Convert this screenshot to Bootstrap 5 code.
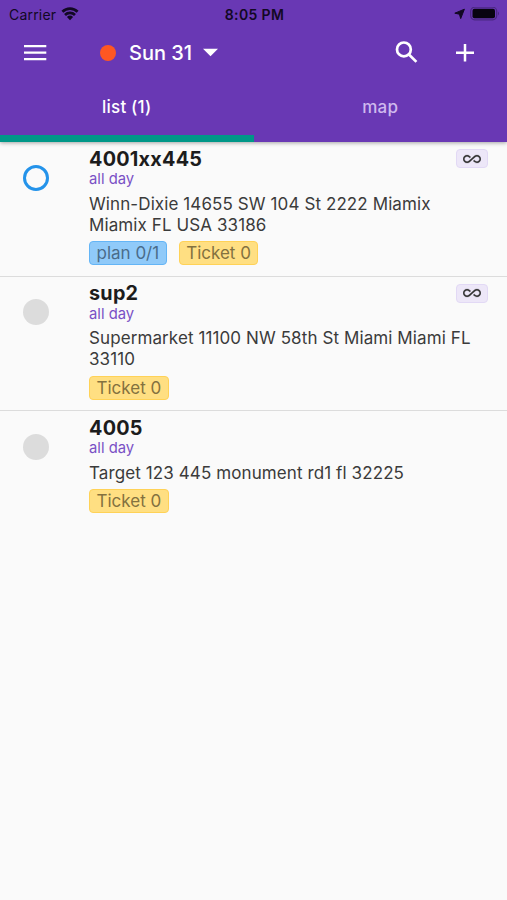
<!DOCTYPE html>
<html lang="en">
<head>
<meta charset="utf-8">
<meta name="viewport" content="width=device-width, initial-scale=1">
<title>Sun 31</title>
<link href="https://cdn.jsdelivr.net/npm/bootstrap@5.3.0/dist/css/bootstrap.min.css" rel="stylesheet">
<style>
body{font-family:Inter,"Liberation Sans",sans-serif;background:#fafafa;color:#3b3b3b}
svg{display:block;flex:none}
.app-head{height:142.3px;background:#6938b4;box-shadow:0 1px 4px rgba(0,0,0,.35)}
.status{height:28px;padding:0 7px 0 9px;color:#120824;font-size:14px}
.status>*{flex:1 1 0}
.carrier{letter-spacing:.2px}
.clock{font-weight:600;letter-spacing:.35px}
.toolbar{height:49px;padding:0 33px 0 23px;color:#fff}
.day{margin-left:53px;font-size:20px;font-weight:500}
.dot{width:16px;height:16px;background:#ff5722}
.day-name{margin:0 11px 0 13px;line-height:28px}
.plus{margin-left:38px}
.tabs{height:65.3px;font-size:17px;font-weight:500;letter-spacing:.2px}
.tabs a{color:#fff;text-decoration:none;padding-top:17px;line-height:26px;border-bottom:7px solid transparent}
.tabs a.active{border-color:#009788}
.tabs a:not(.active){color:#cfb9ee}
.stop{padding:4.6px 19px 0 23px;border-bottom:1px solid #dcdcdc;height:134.4px}
.stop:last-child{border:0}
.state{width:26px;height:26px;margin:18px 40px 0 0;background:#dcdcdc;flex:none}
.state.open{background:none;border:3px solid #2493ea}
.stop h2{font-size:19.8px;font-weight:700;line-height:25.6px;letter-spacing:.25px;color:#1c1c1c;margin:0}
.when{font-size:14.8px;line-height:15px;color:#7950c5}
.addr{font-size:17px;line-height:21px;letter-spacing:.1px;margin:6.3px 0 5.4px}
.chips{gap:12px}
.chip{height:24px;line-height:22px;padding:0 6.5px;border:1px solid #ffd257;border-radius:4px;background:#ffdf82;color:#83713f;font-size:17px}
.chip.plan{background:#90caf9;border-color:#64b5f6;color:#4a6c8a}
.loop{width:32px;height:19px;margin-top:2.6px;border:1px solid #e2d9f5;border-radius:4px;background:#ede7f8;color:#333}
</style>
<script src="https://cdn.jsdelivr.net/npm/bootstrap@5.3.0/dist/js/bootstrap.bundle.min.js"></script>
</head>
<body>
<svg width="0" height="0" class="position-absolute"><symbol id="inf" viewBox="0 0 24 24"><path fill="currentColor" stroke="currentColor" stroke-width=".3" d="M18.6 6.62c-1.44 0-2.8.56-3.77 1.53L12 10.66 10.48 12h.01L7.8 14.39c-.64.64-1.49.99-2.4.99-1.87 0-3.39-1.51-3.39-3.38S3.53 8.62 5.4 8.62c.91 0 1.76.35 2.44 1.03l1.13 1 1.51-1.34L9.22 8.2C8.2 7.18 6.84 6.62 5.4 6.62 2.42 6.62 0 9.04 0 12s2.42 5.38 5.4 5.38c1.44 0 2.8-.56 3.77-1.53l2.83-2.5.01.01L13.52 12h-.01l2.69-2.39c.64-.64 1.49-.99 2.4-.99 1.87 0 3.39 1.51 3.39 3.38s-1.52 3.38-3.39 3.38c-.9 0-1.76-.35-2.44-1.03l-1.14-1.01-1.51 1.34 1.27 1.12c1.02 1.01 2.37 1.57 3.82 1.57 2.98 0 5.4-2.41 5.4-5.38s-2.42-5.37-5.4-5.37z"/></symbol></svg>
<header class="app-head">
  <div class="status d-flex align-items-center">
    <div class="d-flex align-items-center"><span class="carrier">Carrier</span>
      <svg class="ms-1" width="20" height="15" viewBox="0 0 20 15" fill="none" stroke="currentColor" stroke-width="2.7"><path d="M2.4 4.8a10.8 10.8 0 0 1 15.2 0M5 8a7.1 7.1 0 0 1 10 0"/><path d="M10 13.2 6.9 10a4.5 4.5 0 0 1 6.2 0z" fill="currentColor" stroke="none"/></svg></div>
    <div class="clock text-center">8:05 PM</div>
    <div class="d-flex align-items-center justify-content-end">
      <svg width="13" height="13" viewBox="0 0 13 13" fill="currentColor" stroke="currentColor" stroke-width="1" stroke-linejoin="round"><path d="M11.4 1.2 7.7 10.6 6.4 6.2 1.8 5.2z"/></svg>
      <svg class="ms-1" width="30" height="14" viewBox="0 0 30 14"><rect x=".7" y=".2" width="26" height="12.6" rx="4" fill="none" stroke="#4b2882" stroke-width="1.2"/><rect x="2.5" y="1.8" width="22.5" height="9.4" rx="2" fill="#080410"/><path d="M28 4.5q2 2 0 4z" fill="#4b2882"/></svg>
    </div>
  </div>
  <div class="toolbar d-flex align-items-center">
    <svg width="24" height="16" viewBox="0 0 24 16" stroke="currentColor" stroke-width="2.3"><path d="M1 1.2h22.3M1 7.7h22.3M1 14.2h22.3"/></svg>
    <div class="day d-flex align-items-center"><span class="dot rounded-circle"></span><span class="day-name">Sun 31</span>
      <svg width="16" height="9" viewBox="0 0 16 9" fill="currentColor"><path d="M0 .8h15L7.5 8.3z"/></svg></div>
    <svg class="ms-auto" width="23" height="23" viewBox="0 0 23 23" fill="none" stroke="currentColor" stroke-width="2.7"><circle cx="8.9" cy="8.4" r="6.9"/><path d="m13.7 13.2 7.7 7.7"/></svg>
    <svg class="plus" width="18" height="18" viewBox="0 0 18 18" stroke="currentColor" stroke-width="2.5"><path d="M0 8.7h18M9 0v17.5"/></svg>
  </div>
  <nav class="tabs d-flex text-center"><a class="w-50 active" href="#">list (1)</a><a class="w-50" href="#">map</a></nav>
</header>
<main>
  <section class="stop d-flex align-items-start">
    <span class="state open rounded-circle"></span>
    <div class="flex-grow-1">
      <div class="d-flex justify-content-between align-items-start"><h2>4001xx445</h2><span class="loop d-flex align-items-center justify-content-center"><svg width="18" height="18"><use href="#inf"/></svg></span></div>
      <div class="when">all day</div>
      <p class="addr">Winn-Dixie 14655 SW 104 St 2222 Miamix<br>Miamix FL USA 33186</p>
      <div class="d-flex chips"><span class="chip plan">plan 0/1</span><span class="chip">Ticket 0</span></div>
    </div>
  </section>
  <section class="stop d-flex align-items-start">
    <span class="state rounded-circle"></span>
    <div class="flex-grow-1">
      <div class="d-flex justify-content-between align-items-start"><h2>sup2</h2><span class="loop d-flex align-items-center justify-content-center"><svg width="18" height="18"><use href="#inf"/></svg></span></div>
      <div class="when">all day</div>
      <p class="addr">Supermarket 11100 NW 58th St Miami Miami FL<br>33110</p>
      <div class="d-flex chips"><span class="chip">Ticket 0</span></div>
    </div>
  </section>
  <section class="stop d-flex align-items-start">
    <span class="state rounded-circle"></span>
    <div class="flex-grow-1">
      <h2>4005</h2>
      <div class="when">all day</div>
      <p class="addr">Target 123 445 monument rd1 fl 32225</p>
      <div class="d-flex chips"><span class="chip">Ticket 0</span></div>
    </div>
  </section>
</main>
</body>
</html>
